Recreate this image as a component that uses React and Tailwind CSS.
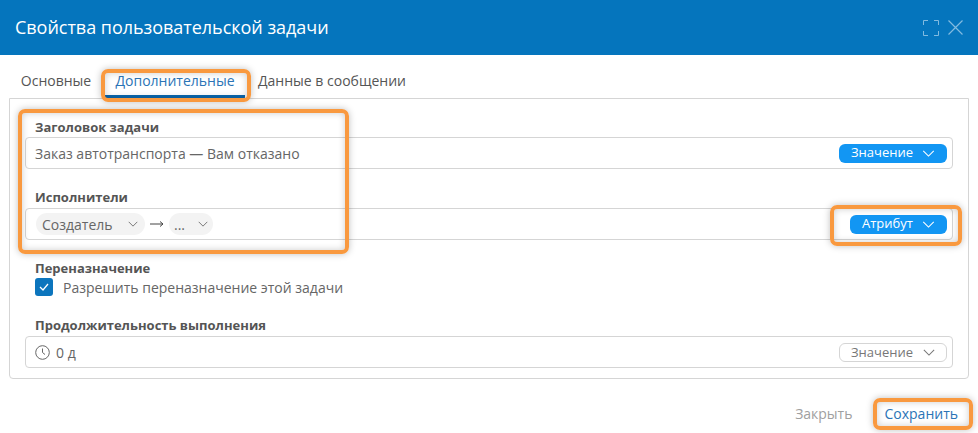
import React from "react";

const Chevron = ({ className }) => (
  <svg viewBox="0 0 14 8" className={className} fill="none" stroke="currentColor" strokeWidth="1.2">
    <path d="M1 1l6 6 6-6" />
  </svg>
);

const Mark = ({ className }) => (
  <div className={"absolute rounded-[7px] border-[4px] border-[#f9993f] shadow-[0_0_7px_rgba(0,0,0,0.25),inset_0_0_7px_rgba(0,0,0,0.2)] pointer-events-none " + className} />
);

const Label = ({ children }) => (
  <div className="pl-[10px] text-[13px] leading-[18px] font-bold text-[#555]">{children}</div>
);

const Field = ({ children, h }) => (
  <div className={"flex items-center justify-between rounded-[4px] border border-[#d5d5d5] bg-white pl-[9px] pr-[5px] " + h}>
    {children}
  </div>
);

const BlueBtn = ({ children, w }) => (
  <div className={"flex h-[19px] items-center justify-between rounded-[6px] bg-[#1296f3] pl-[12px] pr-[12px] text-[13px] text-white " + w}>
    <span>{children}</span>
    <Chevron className="h-[7px] w-[13px]" />
  </div>
);

export default function App() {
  return (
    <div className="relative h-[433px] w-[978px] overflow-hidden bg-white text-[14px] text-[#666] font-['Open_Sans',sans-serif]">
      <header className="flex h-[55px] items-center justify-between bg-[#0575bd] pl-[15px] pr-[15px]">
        <h1 className="text-[18px] tracking-[-0.03px] text-white">Свойства пользовательской задачи</h1>
        <div className="flex items-center gap-[9px] text-[#82bbe0]">
          <svg width="16" height="16" viewBox="0 0 16 16" fill="none" stroke="currentColor" strokeWidth="1">
            <path d="M.5 5V.5H5M11 .5h4.500V5M15.500 11v4.500H11M5 15.500H.5V11" />
          </svg>
          <svg width="15" height="15" viewBox="0 0 15 15" fill="none" stroke="currentColor" strokeWidth="1.200">
            <path d="M.5.500l14 14M14.500.500l-14 14" />
          </svg>
        </div>
      </header>

      <nav className="flex h-[43px] items-end pl-[9px] text-[#555]">
        <div className="flex h-[26px] w-[94px] justify-center text-[14px] leading-[17px]">Основные</div>
        <div className="ml-[2px] flex h-[26px] w-[140px] justify-center border-b-[3px] border-[#0c67ad] text-[14px] leading-[17px] text-[#2b74b6]">Дополнительные</div>
        <div className="h-[26px] pl-[13px] text-[14px] leading-[17px]">Данные в сообщении</div>
      </nav>

      <section className="mx-[9px] h-[281px] w-[960px] rounded-b-[4px] border border-[#d5d5d5] px-[15px] pt-[19px]">
        <Label>Заголовок задачи</Label>
        <Field h="h-[32px] mt-[1px]">
          <span className="text-[14px]">Заказ автотранспорта — Вам отказано</span>
          <BlueBtn w="w-[108px]">Значение</BlueBtn>
        </Field>

        <div className="mt-[19px]"><Label>Исполнители</Label></div>
        <Field h="h-[32px] mt-[2px]">
          <div className="flex items-center">
            <div className="ml-[1px] flex h-[22px] w-[109px] items-center justify-between rounded-full bg-[#f3f3f3] pl-[6px] pr-[7px]">
              <span>Создатель</span>
              <Chevron className="h-[6px] w-[10px]" />
            </div>
            <svg width="14" height="8" viewBox="0 0 14 8" className="mx-[5px]" fill="none" stroke="#444" strokeWidth="1">
              <path d="M0 4h13M10 1.500L13 4l-3 2.500" />
            </svg>
            <div className="flex h-[22px] w-[44px] items-center justify-between rounded-full bg-[#f3f3f3] pl-[5px] pr-[5px]">
              <span>...</span>
              <Chevron className="h-[6px] w-[10px]" />
            </div>
          </div>
          <BlueBtn w="w-[97px]">Атрибут</BlueBtn>
        </Field>

        <div className="mt-[19px]"><Label>Переназначение</Label></div>
        <div className="mt-[1px] ml-[10px] flex h-[18px] items-center gap-[10px]">
          <div className="flex h-[18px] w-[18px] items-center justify-center rounded-[3px] bg-[#0c75bd]">
            <svg width="10" height="8" viewBox="0 0 10 8" fill="none" stroke="white" strokeWidth="1.300">
              <path d="M1 4l3 3 5-6" />
            </svg>
          </div>
          <span className="text-[14px]">Разрешить переназначение этой задачи</span>
        </div>

        <div className="mt-[20px]"><Label>Продолжительность выполнения</Label></div>
        <Field h="h-[32px] mt-[2px]">
          <div className="flex items-center gap-[6px]">
            <svg width="15" height="15" viewBox="0 0 15 15" fill="none" stroke="currentColor" strokeWidth="1">
              <circle cx="7.500" cy="7.500" r="6.800" />
              <path d="M7.500 3.500v4l2.500 2" />
            </svg>
            <span>0 д</span>
          </div>
          <div className="flex h-[19px] w-[108px] items-center justify-between rounded-[6px] border border-[#d5d5d5] pl-[11px] pr-[11px] pt-[1px] text-[13px] text-[#777]">
            <span>Значение</span>
            <Chevron className="h-[7px] w-[12px]" />
          </div>
        </Field>
      </section>

      <footer className="mt-[24px] flex items-center justify-end pr-[20px]">
        <span className="text-[#a0a0a0]">Закрыть</span>
        <span className="ml-[32px] text-[#2b74b6]">Сохранить</span>
      </footer>

      <Mark className="left-[101px] top-[69px] h-[33px] w-[150px]" />
      <Mark className="left-[18px] top-[109px] h-[145px] w-[331px]" />
      <Mark className="left-[830px] top-[205px] h-[41px] w-[132px]" />
      <Mark className="left-[873px] top-[398px] h-[32px] w-[100px]" />
    </div>
  );
}
